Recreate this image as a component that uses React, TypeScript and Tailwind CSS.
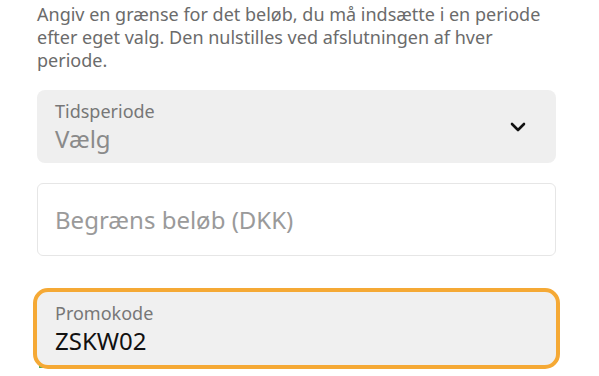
import React from "react";

export default function App() {
  return (
    <div
      className="w-[599px] h-[376px] overflow-hidden bg-white pl-[37px] pr-[43px]"
      style={{ fontFamily: '"Noto Sans", "Open Sans", sans-serif' }}
    >
      <p className="pt-[3px] text-[18px] leading-[23px] text-[#6b6b6b]">
        Angiv en grænse for det beløb, du må indsætte i en periode efter eget valg. Den nulstilles ved afslutningen af hver periode.
      </p>

      <div className="mt-[18px] h-[73px] rounded-[8px] bg-[#efefef] flex items-center justify-between pl-[18px] pr-[30px]">
        <div className="flex flex-col">
          <span className="text-[18px] leading-[24px] text-[#777]">Tidsperiode</span>
          <span className="text-[24px] leading-[32px] text-[#8a8a8a]">Vælg</span>
        </div>
        <svg width="16" height="10" viewBox="0 0 16 10" fill="none">
          <path d="M2 2 L8 8 L14 2" stroke="#111" strokeWidth="2.6" strokeLinecap="round" strokeLinejoin="round" />
        </svg>
      </div>

      <div className="mt-[20px] h-[73px] rounded-[6px] border border-[#e6e6e6] bg-white flex items-center pl-[17px]">
        <span className="text-[24px] leading-[32px] text-[#9a9a9a]">Begræns beløb (DKK)</span>
      </div>

      <div className="mt-[36px] relative">
        <div className="absolute left-[2px] w-[10px] bottom-[-3px] h-[2px] bg-[#4caf50]" />
        <div className="relative h-[73px] rounded-[11px] bg-[#f0f0f0] outline-[4px] outline-solid outline-[#f5a935] flex flex-col justify-center pl-[18px]">
          <span className="text-[18px] leading-[24px] text-[#777]">Promokode</span>
          <span className="text-[24px] leading-[32px] text-[#111]">ZSKW02</span>
        </div>
      </div>
    </div>
  );
}
